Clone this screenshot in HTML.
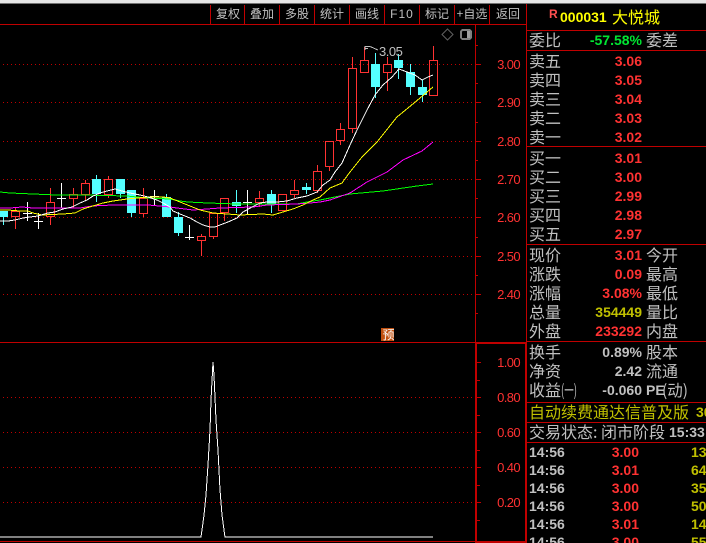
<!DOCTYPE html>
<html><head><meta charset="utf-8"><style>
html,body{margin:0;padding:0;background:#000;width:706px;height:543px;overflow:hidden}
svg{display:block;position:absolute;left:0;top:0}
text{white-space:pre}
.c{font-family:"WenQuanYi Zen Hei","Noto Sans CJK SC",sans-serif;font-size:16px;fill:#c0c0c0}
.t{font-family:"WenQuanYi Zen Hei","Noto Sans CJK SC",sans-serif;font-size:12px;fill:#c0c0c0;text-anchor:middle}
.v{font-family:"Liberation Sans",sans-serif;font-weight:bold;font-size:14px;fill:#ff3232;text-anchor:end}
.g{fill:#c0c0c0}.y{fill:#c0c000}
.a{font-family:"Liberation Sans",sans-serif;font-size:13px;letter-spacing:-.6px;fill:#ff3232;text-anchor:end}
.tm{font-family:"Liberation Sans",sans-serif;font-weight:bold;font-size:14px;fill:#c0c0c0}
.vol{font-family:"Liberation Sans",sans-serif;font-weight:bold;font-size:14px;fill:#c0c000}
</style></head><body>
<svg width="706" height="543" viewBox="0 0 706 543" xmlns="http://www.w3.org/2000/svg">
<rect width="706" height="543" fill="#000"/>
<rect width="706" height="3.5" fill="#e6e6e6"/>
<g shape-rendering="crispEdges">
<g stroke="#c00000" stroke-width="1" stroke-dasharray="1 3" fill="none">
<path d="M3 64.5H475M3 102.5H475M3 141.5H475M3 179.5H475M3 217.5H475M3 256.5H475M3 294.5H475M3 397.5H475M3 432.5H475M3 467.5H475M3 502.5H475"/>
</g>
<g stroke="#c00000" stroke-width="1" fill="none">
<path d="M0 24.5H526M210.5 5V24M244.5 5V24M279.5 5V24M314.5 5V24M349.5 5V24M384.5 5V24M419.5 5V24M454.5 5V24M489.5 5V24"/>
<path d="M475.5 24V342M526.5 4V543"/>
<path d="M0 342.5H526M527 30.5H706M527 50.5H706M527 146.5H706M527 244.5H706M527 341.5H706M527 402.5H706M527 422.5H706M527 442.5H706"/>
<path d="M476 64.5H481M476 102.5H481M476 141.5H481M476 179.5H481M476 217.5H481M476 256.5H481M476 294.5H481M476 83.5H478M476 45.5H478M476 122.5H478M476 160.5H478M476 198.5H478M476 237.5H478M476 275.5H478M476 313.5H478"/>
<path d="M477 362.5H481M477 397.5H481M477 432.5H481M477 467.5H481M477 502.5H481M477 380.5H480M477 415.5H480M477 450.5H480M477 485.5H480M477 520.5H480"/>
</g>
<rect x="475" y="342" width="52" height="2" fill="#c00000"/>
<rect x="475" y="342" width="2" height="201" fill="#c00000"/>
<rect x="525" y="342" width="2" height="201" fill="#c00000"/>
<rect x="475" y="541" width="52" height="2" fill="#c00000"/>
<rect x="0" y="541" width="475" height="1" fill="#c00000"/>

<g stroke="#54ffff" fill="none">
<path d="M3.5 211V225M96.5 175V202M120.5 179V198M131.5 190V217M166.5 194V217M178.5 212V236M236.5 190V213M271.5 190V213M306.5 183V194M375.5 53V98M398.5 54V79M410.5 64V95M422.5 80V102"/>
</g>
<g fill="#54ffff">
<rect x="-1" y="211" width="9" height="6"/><rect x="92" y="179" width="9" height="15"/><rect x="116" y="179" width="9" height="15"/><rect x="127" y="190" width="9" height="23"/><rect x="162" y="197" width="9" height="20"/><rect x="174" y="217" width="9" height="16"/><rect x="232" y="202" width="9" height="4"/><rect x="267" y="194" width="9" height="10"/><rect x="302" y="187" width="9" height="3"/><rect x="371" y="64" width="9" height="23"/><rect x="394" y="60" width="9" height="8"/><rect x="406" y="72" width="9" height="15"/><rect x="418" y="87" width="9" height="8"/>
</g>
<g stroke="#fff" fill="none">
<path d="M27.5 202V221M23 213.5H32M38.5 213V229M34 221.5H43M61.5 183V208M57 198.5H66M154.5 190V205M150 196.5H159M189.5 225V240M185 237.5H194M247.5 190V215M243 202.5H252"/>
</g>
<g stroke="#ff3232" fill="none">
<path d="M15.5 207V211M15.5 217V229M50.5 188V202M50.5 217V225M73.5 188V194M73.5 199V208M85.5 180V183M85.5 195V200M108.5 176V179M108.5 195V198M143.5 188V198M143.5 214V217M201.5 234V236M201.5 241V256M213.5 237V239M224.5 213V221M259.5 191V198M259.5 203V207M294.5 180V190M294.5 195V198M317.5 165V171M317.5 191V193M329.5 167V171M340.5 123V129M340.5 141V145M352.5 57V68M352.5 129V133M364.5 47V60M387.5 57V64M387.5 73V91M433.5 46V60"/>
<path d="M11.5 211.5h8v5h-8zM46.5 202.5h8v14h-8zM69.5 194.5h8v4h-8zM81.5 183.5h8v11h-8zM104.5 179.5h8v15h-8zM139.5 198.5h8v15h-8zM197.5 236.5h8v4h-8zM209.5 213.5h8v23h-8zM220.5 198.5h8v14h-8zM255.5 198.5h8v4h-8zM278.5 194.5h8v16h-8zM290.5 190.5h8v4h-8zM313.5 171.5h8v19h-8zM325.5 141.5h8v25h-8zM336.5 129.5h8v11h-8zM348.5 68.5h8v60h-8zM360.5 60.5h8v12h-8zM383.5 64.5h8v8h-8zM429.5 60.5h8v35h-8z"/>
</g>
<g fill="none" stroke-width="1">
<polyline stroke="#00ff00" points="0,192 10,193 33,194 57,195 83,195 127,196 147,198 170,199 180,201 188,202 208,203 237,204 260,204 297,204 307,202 320,200 330,198 350,194 383,191 417,186 433,184"/>
<polyline stroke="#ff00ff" points="0,208 10,208 22,207 33,208 80,208 92,206 113,205 137,205 148,205 170,207 177,208 193,210 207,209 220,208 253,207 267,205 297,204 310,203 320,202 330,200 350,193 367,182 387,172 403,160 422,151 433,142"/>
<polyline stroke="#ffff00" points="0,210 8,210 20,211 28,211 33,213 42,215 63,214 75,213 83,209 93,206 103,203 113,201 127,199 137,198 150,197 163,197 170,198 180,202 190,206 200,210 213,213 227,214 240,215 263,214 273,215 283,212 293,209 303,205 313,200 320,197 330,188 342,183 350,172 362,157 377,142 385,132 397,117 408,108 420,98 433,87"/>
<polyline stroke="#ffffff" points="0,221 8,221 15,220 23,218 30,217 38,216 48,213 55,212 63,209 72,207 80,203 87,200 93,196 100,193 107,191 115,189 122,191 130,193 140,195 148,197 157,200 163,203 170,207 173,211 180,214 190,218 197,222 203,225 210,227 215,227 220,225 228,222 237,218 243,212 252,207 260,203 267,202 277,202 287,201 297,198 307,196 317,192 323,185 330,180 335,172 342,163 350,145 357,130 367,110 375,95 383,85 392,77 399,69 407,72 415,75 422,80 428,77 433,75"/>
</g>
<polyline fill="none" stroke="#fff" points="0,537 201,537 202,530 204,515 206,495 208,465 210,430 211,400 213,362 214,375 216,420 218,450 220,490 222,515 224,530 225,537 433,537"/>
<path d="M365 46.5h5M365 46V50M365 48.5h3M370 46.5L378 50" fill="none" stroke="#c0c0c0"/>
<rect x="381" y="328" width="13" height="13" fill="#c05010"/>
<rect x="461" y="30" width="10" height="9" rx="2" fill="none" stroke="#808080" stroke-width="2"/>
<rect x="467" y="31" width="3" height="7" fill="#a0a0a0"/>
</g>
<path d="M447.5 29L453 34.5L447.5 40L442 34.5Z" fill="none" stroke="#606060"/>

<text class="t" x="228" y="18">复权</text><text class="t" x="262" y="18">叠加</text><text class="t" x="297" y="18">多股</text><text class="t" x="332" y="18">统计</text><text class="t" x="367" y="18">画线</text>
<text x="402" y="18" text-anchor="middle" font-family="Liberation Sans,sans-serif" font-size="12" fill="#c0c0c0" letter-spacing="1">F10</text>
<text class="t" x="437" y="18">标记</text><text class="t" x="472" y="18">+自选</text><text class="t" x="508" y="18">返回</text>

<text x="379" y="56" font-family="Liberation Sans,sans-serif" font-size="13" letter-spacing="-.5" fill="#c0c0c0">3.05</text>
<text x="382.5" y="339" text-anchor="start" font-family="WenQuanYi Zen Hei,sans-serif" font-size="12" fill="#fff">预</text>

<text class="a" x="520" y="69">3.00</text><text class="a" x="520" y="107">2.90</text><text class="a" x="520" y="146">2.80</text><text class="a" x="520" y="184">2.70</text><text class="a" x="520" y="222">2.60</text><text class="a" x="520" y="261">2.50</text><text class="a" x="520" y="299">2.40</text>
<text class="a" x="520" y="367">1.00</text><text class="a" x="520" y="402">0.80</text><text class="a" x="520" y="437">0.60</text><text class="a" x="520" y="472">0.40</text><text class="a" x="520" y="507">0.20</text>

<text x="549" y="18" font-family="Liberation Sans,sans-serif" font-weight="bold" font-size="12" fill="#ff5050">R</text>
<text x="560" y="22" font-family="Liberation Sans,sans-serif" font-weight="bold" font-size="14" fill="#ffff00">000031</text>
<text class="c" x="612" y="23" style="fill:#ffff00">大悦城</text>

<text class="c" x="529" y="46">委比</text><text class="v" x="642" y="45" style="fill:#00e632">-57.58%</text><text class="c" x="646" y="46">委差</text>
<text class="c" x="529" y="67">卖五</text><text class="v" x="642" y="66">3.06</text>
<text class="c" x="529" y="86">卖四</text><text class="v" x="642" y="85">3.05</text>
<text class="c" x="529" y="105">卖三</text><text class="v" x="642" y="104">3.04</text>
<text class="c" x="529" y="124">卖二</text><text class="v" x="642" y="123">3.03</text>
<text class="c" x="529" y="143">卖一</text><text class="v" x="642" y="142">3.02</text>
<text class="c" x="529" y="164">买一</text><text class="v" x="642" y="163">3.01</text>
<text class="c" x="529" y="183">买二</text><text class="v" x="642" y="182">3.00</text>
<text class="c" x="529" y="202">买三</text><text class="v" x="642" y="201">2.99</text>
<text class="c" x="529" y="221">买四</text><text class="v" x="642" y="220">2.98</text>
<text class="c" x="529" y="240">买五</text><text class="v" x="642" y="239">2.97</text>
<text class="c" x="529" y="261">现价</text><text class="v" x="642" y="260">3.01</text><text class="c" x="646" y="261">今开</text>
<text class="c" x="529" y="280">涨跌</text><text class="v" x="642" y="279">0.09</text><text class="c" x="646" y="280">最高</text>
<text class="c" x="529" y="299">涨幅</text><text class="v" x="642" y="298">3.08%</text><text class="c" x="646" y="299">最低</text>
<text class="c" x="529" y="318">总量</text><text class="v y" x="642" y="317">354449</text><text class="c" x="646" y="318">量比</text>
<text class="c" x="529" y="337">外盘</text><text class="v" x="642" y="336">233292</text><text class="c" x="646" y="337">内盘</text>
<text class="c" x="529" y="358">换手</text><text class="v g" x="642" y="357">0.89%</text><text class="c" x="646" y="358">股本</text>
<text class="c" x="529" y="377">净资</text><text class="v g" x="642" y="376">2.42</text><text class="c" x="646" y="377">流通</text>
<text class="c" x="529" y="396">收益</text><text class="c" x="561" y="396" textLength="16" lengthAdjust="spacingAndGlyphs">(一)</text><text class="v g" x="642" y="395">-0.060</text><text x="646" y="395" font-family="Liberation Sans,sans-serif" font-weight="bold" font-size="14" fill="#c0c0c0">PE</text><text class="c" x="662" y="396" textLength="26" lengthAdjust="spacingAndGlyphs">(动)</text>
<text class="c" x="529" y="418" style="fill:#c0c000">自动续费通达信普及版</text><text class="vol" x="696" y="417">30</text>
<text class="c" x="529" y="438">交易状态:</text><text class="c" x="601" y="438">闭市阶段</text><text class="tm" x="669" y="437">15:33:</text>
<text class="tm" x="529" y="457">14:56</text><text class="v" x="639" y="457">3.00</text><text class="vol" x="691" y="457">13</text>
<text class="tm" x="529" y="475">14:56</text><text class="v" x="639" y="475">3.01</text><text class="vol" x="691" y="475">64</text>
<text class="tm" x="529" y="493">14:56</text><text class="v" x="639" y="493">3.00</text><text class="vol" x="691" y="493">35</text>
<text class="tm" x="529" y="511">14:56</text><text class="v" x="639" y="511">3.00</text><text class="vol" x="691" y="511">50</text>
<text class="tm" x="529" y="529">14:56</text><text class="v" x="639" y="529">3.01</text><text class="vol" x="691" y="529">14</text>
<text class="tm" x="529" y="547">14:56</text><text class="v" x="639" y="547">3.00</text><text class="vol" x="691" y="547">55</text>
</svg>
</body></html>
